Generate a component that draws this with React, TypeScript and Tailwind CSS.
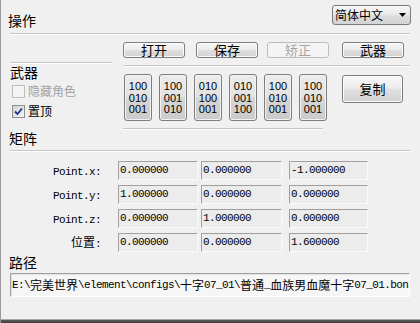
import React from "react";

function Sep({ className = "" }: { className?: string }) {
  return <div className={"h-[2px] border-t border-b border-t-[#c6c6c6] border-b-white " + className} />;
}

function Mixed({ text }: { text: string }) {
  const parts = text.match(/[\u3000-\u9fff]+|[^\u3000-\u9fff]+/g) || [];
  return (
    <>
      {parts.map((p, i) =>
        /[\u3000-\u9fff]/.test(p) ? (
          <span key={i} className="font-['Noto_Sans_CJK_SC',sans-serif] text-[12px] tracking-normal">
            {p}
          </span>
        ) : (
          <span key={i} className="font-['Liberation_Mono',monospace] text-[11px] tracking-[-0.6px]">
            {p}
          </span>
        )
      )}
    </>
  );
}

function Btn({
  label,
  className = "",
  disabled = false,
}: {
  label: string;
  className?: string;
  disabled?: boolean;
}) {
  return (
    <div
      className={
        "h-[16px] w-[62px] rounded-[3px] border flex items-center justify-center text-[13px] leading-[14px] " +
        (disabled
          ? "border-[#bcbcbc] bg-[#f4f4f4] text-[#a6a6a6] "
          : "border-[#7d7d7d] bg-[linear-gradient(#f7f7f7,#ececec_45%,#dedede_55%,#d3d3d3)] shadow-[inset_0_0_0_1px_#fbfbfb] ") +
        className
      }
    >
      {label}
    </div>
  );
}

function MatBtn({ rows }: { rows: string[] }) {
  return (
    <div className="w-[28px] h-[47px] rounded-[3px] border border-[#7d7d7d] bg-[linear-gradient(#ececec,#e2e2e2_48%,#d6d6d6_52%,#cbcbcb)] shadow-[inset_0_0_0_1px_#f2f2f2] flex flex-col items-center justify-center pt-[2px] font-['Liberation_Sans',sans-serif] text-[11px] leading-[11.5px]">
      {rows.map((r, i) => (
        <span key={i}>{r}</span>
      ))}
    </div>
  );
}

function Field({ value, className = "" }: { value: string; className?: string }) {
  return (
    <div
      className={
        "h-[19px] flex items-center pl-[1px] bg-[#ececec] border border-t-[#a0a0a0] border-l-[#a0a0a0] border-b-[#fafafa] border-r-[#fafafa] whitespace-nowrap overflow-hidden " +
        className
      }
    >
      <Mixed text={value} />
    </div>
  );
}

const matrices = [
  ["100", "010", "001"],
  ["100", "001", "010"],
  ["010", "100", "001"],
  ["010", "001", "100"],
  ["100", "010", "001"],
  ["100", "010", "001"],
];

const rows: { label: string; v: string[] }[] = [
  { label: "Point.x:", v: ["0.000000", "0.000000", "-1.000000"] },
  { label: "Point.y:", v: ["1.000000", "0.000000", "0.000000"] },
  { label: "Point.z:", v: ["0.000000", "1.000000", "0.000000"] },
  { label: "位置:", v: ["0.000000", "0.000000", "1.600000"] },
];

export default function App() {
  return (
    <div className="w-[420px] h-[323px] bg-[#f0f0f0] border-l border-l-[#9a9a9a] flex flex-col text-black font-['Noto_Sans_CJK_SC',sans-serif] overflow-hidden">
      {/* header */}
      <div className="h-[33px] flex justify-between items-start">
        <span className="ml-[7px] mt-[12px] text-[14px] leading-[16px]">操作</span>
        <div className="mt-[5px] mr-[9px] w-[79px] h-[20px] rounded-[3px] border border-[#7a7a7a] bg-[linear-gradient(#f6f6f6,#ebebeb_45%,#dddddd_55%,#d3d3d3)] flex items-center justify-between pl-[2px] pr-[4px]">
          <span className="text-[12px] leading-[14px]">简体中文</span>
          <svg width="7" height="4" viewBox="0 0 7 4">
            <path d="M0 0H7L3.5 4Z" fill="#000" />
          </svg>
        </div>
      </div>
      <Sep className="ml-[9px] mr-[10px]" />

      {/* middle */}
      <div className="flex">
        <div className="ml-[9px] w-[103px] flex flex-col">
          <Sep className="mt-[27px]" />
          <span className="text-[14px] leading-[17px]">武器</span>
          <div className="h-[20px] flex items-center pl-[2px] gap-[3px]">
            <div className="w-[13px] h-[13px] border border-[#bdbdbd] bg-[#f4f4f4]" />
            <span className="text-[12px] leading-[14px] text-[#a3a3a3]">隐藏角色</span>
          </div>
          <div className="h-[20px] flex items-center pl-[2px] gap-[3px]">
            <div className="w-[13px] h-[13px] border border-[#8e8f8f] bg-[linear-gradient(135deg,#cfd3d8,#f4f5f6)] flex items-center justify-center">
              <svg width="9" height="9" viewBox="0 0 9 9">
                <path d="M1 4.5L3.5 7L8 1.5" stroke="#26348b" strokeWidth="1.8" fill="none" />
              </svg>
            </div>
            <span className="text-[12px] leading-[14px]">置顶</span>
          </div>
        </div>
        <div className="ml-[10px] flex-1 mr-[10px] flex flex-col">
          <div className="mt-[7px] flex">
            <Btn label="打开" />
            <Btn label="保存" className="ml-[11px]" />
            <Btn label="矫正" className="ml-[9px]" disabled />
            <Btn label="武器" className="ml-[13px] w-[61px]" />
          </div>
          <Sep className="mt-[7px]" />
          <div className="mt-[7px] flex items-start">
            <div className="ml-[1px] flex gap-[7px]">
              {matrices.map((m, i) => (
                <MatBtn key={i} rows={m} />
              ))}
            </div>
            <div className="ml-[15px] mt-[1px] w-[61px] h-[28px] rounded-[3px] border border-[#7d7d7d] bg-[linear-gradient(#f7f7f7,#ececec_45%,#dedede_55%,#d3d3d3)] shadow-[inset_0_0_0_1px_#fbfbfb] flex items-center justify-center text-[13px] leading-[14px]">
              复制
            </div>
          </div>
          <Sep className="mt-[7px] w-[200px]" />
        </div>
      </div>

      {/* matrix */}
      <span className="ml-[8px] text-[14px] leading-[16px]">矩阵</span>
      <Sep className="ml-[9px] mr-[10px] mt-[4px]" />
      <div className="mt-[9px] flex flex-col gap-[5px]">
        {rows.map((r, i) => (
          <div key={i} className="h-[19px] flex items-center">
            <div className="w-[100px] text-right whitespace-nowrap leading-[19px]">
              <Mixed text={r.label} />
            </div>
            <Field value={r.v[0]} className="ml-[17px] w-[80px]" />
            <Field value={r.v[1]} className="ml-[3px] w-[81px]" />
            <Field value={r.v[2]} className="ml-[7px] w-[79px]" />
          </div>
        ))}
      </div>

      {/* path */}
      <span className="ml-[8px] mt-[2px] text-[14px] leading-[16px]">路径</span>
      <div className="ml-[9px] mt-[3px] w-[400px] h-[24px] flex items-center pl-[1px] bg-[#f6f6f6] border border-t-[#a0a0a0] border-l-[#a0a0a0] border-b-white border-r-white shadow-[inset_1px_1px_0_#e2e2e2] whitespace-nowrap overflow-hidden">
        <Mixed text="E:\完美世界\element\configs\十字07_01\普通_血族男血魔十字07_01.bon" />
      </div>

      {/* bottom frame */}
      <div className="mt-auto h-[4px] border-t border-t-[#a8a8a8] bg-[linear-gradient(#5a5a5a,#3e3e3e)]" />
    </div>
  );
}
